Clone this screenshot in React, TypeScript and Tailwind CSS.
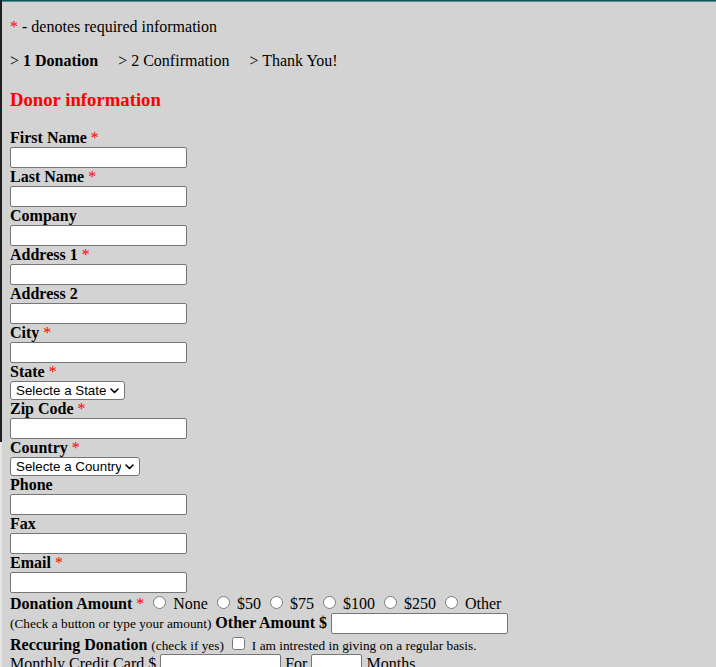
import React from "react";

const inputCls =
  "bg-white border border-[#767676] rounded-[2px] px-[2px] h-[21px] font-['Liberation_Sans',Arial,sans-serif] text-[13.33px] leading-[normal] outline-none";

function Req() {
  return <span className="text-[#ff0000] font-normal">*</span>;
}

function Field({ label, req }: { label: string; req?: boolean }) {
  return (
    <div>
      <div className="font-bold leading-[18px]">
        {label}
        {req ? (
          <>
            {" "}
            <Req />
          </>
        ) : null}
      </div>
      <input type="text" className={`${inputCls} block w-[177px]`} />
    </div>
  );
}

function SelectField({ label, text, width }: { label: string; text: string; width: string }) {
  return (
    <div>
      <div className="font-bold leading-[18px]">
        {label} <Req />
      </div>
      <div className={`relative h-[19px] ${width}`}>
        <select className="block appearance-none w-full h-full bg-white border border-[#767676] rounded-[3px] pl-[5px] pr-[18px] font-['Liberation_Sans',Arial,sans-serif] text-[13.33px] leading-[17px] text-black outline-none">
          <option>{text}</option>
        </select>
        <svg
          className="absolute right-[6px] top-[7px] pointer-events-none"
          width="9"
          height="6"
          viewBox="0 0 9 6"
          fill="none"
        >
          <path d="M1 1l3.5 3.5L8 1" stroke="#000" strokeWidth="1.6" strokeLinecap="round" strokeLinejoin="round" />
        </svg>
      </div>
    </div>
  );
}

export default function App() {
  const radios = ["None", "$50", "$75", "$100", "$250", "Other"];
  return (
    <div className="min-h-screen bg-[#d3d3d3] flex font-['Liberation_Serif','Times_New_Roman',serif] text-[16px] text-black leading-[normal]">
      <div className="w-[2px] shrink-0 flex flex-col">
        <div className="h-[442px] bg-[#1f1f1f]" />
        <div className="flex-1 bg-[#e4e4e4]" />
      </div>
      <div className="flex-1 min-w-0">
        <div className="h-[1px] bg-[#12575c]" />
        <div className="h-[1px] bg-[#5a8b8e]" />
        <div className="pl-[8px]">
          <p className="mt-[16px] leading-[18px]">
            <Req /> - denotes required information
          </p>
          <p className="mt-[16px] leading-[18px] whitespace-nowrap">
            <span>
              &gt; <b>1 Donation</b>
            </span>
            <span className="ml-[20px]">&gt; 2 Confirmation</span>
            <span className="ml-[20px]">&gt; Thank You!</span>
          </p>
          <h3 className="mt-[19px] text-[18.72px] font-bold leading-[21px] text-[#ff0000]">Donor information</h3>
          <div className="mt-[19px]">
            <Field label="First Name" req />
            <Field label="Last Name" req />
            <Field label="Company" />
            <Field label="Address 1" req />
            <Field label="Address 2" />
            <Field label="City" req />
            <SelectField label="State" text="Selecte a State" width="w-[115px]" />
            <Field label="Zip Code" req />
            <SelectField label="Country" text="Selecte a Country" width="w-[130px]" />
            <Field label="Phone" />
            <Field label="Fax" />
            <Field label="Email" req />
          </div>
          <div className="whitespace-nowrap leading-[normal]">
            <b>Donation Amount</b> <Req />{" "}
            {radios.map((r) => (
              <React.Fragment key={r}>
                <input type="radio" name="amt" className="m-[3px_3px_0_5px] w-[13px] h-[13px] align-baseline" /> {r}{" "}
              </React.Fragment>
            ))}
          </div>
          <div className="whitespace-nowrap leading-[normal]">
            <span className="text-[13.33px]">(Check a button or type your amount)</span> <b>Other Amount $</b>{" "}
            <input type="text" className={`${inputCls} w-[177px]`} />
          </div>
          <div className="whitespace-nowrap leading-[normal]">
            <b>Reccuring Donation</b> <span className="text-[13.33px]">(check if yes)</span>{" "}
            <input type="checkbox" className="m-[3px_3px_3px_4px] w-[13px] h-[13px] align-baseline" />{" "}
            <span className="text-[13.33px]">I am intrested in giving on a regular basis.</span>
          </div>
          <div className="whitespace-nowrap leading-[normal]">
            Monthly Credit Card ${" "}
            <input type="text" className={`${inputCls} w-[121px]`} /> For{" "}
            <input type="text" className={`${inputCls} w-[51px]`} /> Months
          </div>
          <div className="h-[40px]" />
        </div>
      </div>
    </div>
  );
}
